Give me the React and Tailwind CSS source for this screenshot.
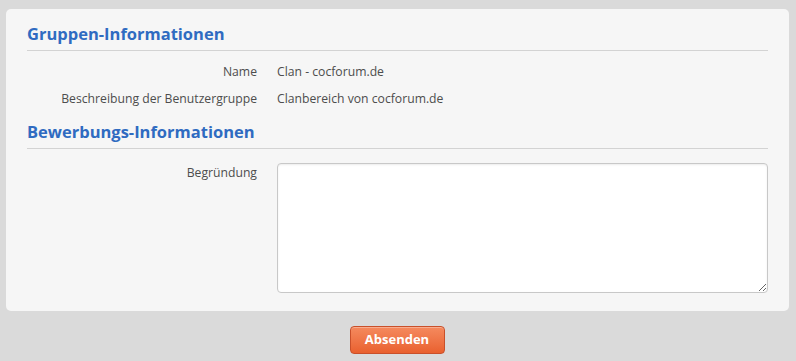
export default function App() {
  return (
    <div className="min-h-[361px] bg-[#dadada] pt-[9px] px-[6px] pb-[8px]" style={{ fontFamily: '"Open Sans", "Liberation Sans", sans-serif' }}>
      <div className="bg-[#f6f6f6] rounded-[5px] pl-[21px] pr-[21px] pt-[12px] pb-[18px] w-[783px]">
        <h2 className="text-[16.5px] font-bold text-[#2f6bc1] leading-[26px] pb-[3px] border-b border-[#d3d3d3]">Gruppen-Informationen</h2>
        <dl className="mt-[8px] text-[12.2px] text-[#4d4d4d]">
          <div className="flex items-center h-[27px]">
            <dt className="w-[230px] text-right">Name</dt>
            <dd className="ml-[20px]">Clan - cocforum.de</dd>
          </div>
          <div className="flex items-center h-[27px]">
            <dt className="w-[230px] text-right">Beschreibung der Benutzergruppe</dt>
            <dd className="ml-[20px]">Clanbereich von cocforum.de</dd>
          </div>
        </dl>
        <h2 className="mt-[6px] text-[16.5px] font-bold text-[#2f6bc1] leading-[26px] pb-[3px] border-b border-[#d3d3d3]">Bewerbungs-Informationen</h2>
        <div className="flex mt-[14px] text-[12.2px] text-[#4d4d4d]">
          <label className="w-[230px] text-right pt-[1px]">Begründung</label>
          <textarea className="ml-[20px] w-[491px] h-[130px] bg-white border border-[#c8c8c8] rounded-[4px] shadow-[inset_0_1px_2px_rgba(0,0,0,0.08)] resize" />
        </div>
      </div>
      <div className="flex justify-center mt-[15px]">
        <button className="ml-[-2px] w-[95px] h-[28px] rounded-[4px] border border-[#c9502a] bg-gradient-to-b from-[#f58a5e] to-[#e9602e] text-white text-[13px] font-bold shadow-[inset_0_1px_0_rgba(255,255,255,0.3)]">Absenden</button>
      </div>
    </div>
  )
}
